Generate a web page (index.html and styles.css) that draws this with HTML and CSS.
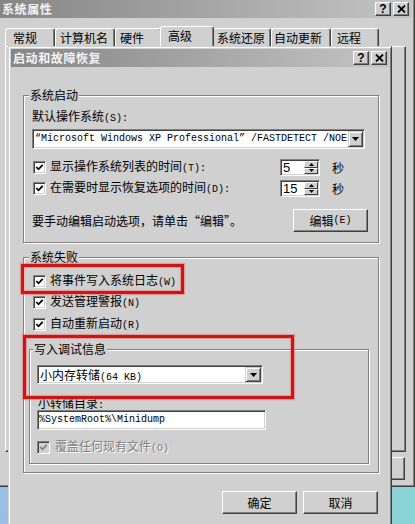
FILE: index.html
```html
<!DOCTYPE html>
<html lang="zh-CN">
<head>
<meta charset="utf-8">
<title>系统属性</title>
<link rel="stylesheet" href="styles.css">
</head>
<body>
<div class="screen">
  <div class="window outer">
    <div class="titlebar">
      <span class="title-text">系统属性</span>
      <div class="title-btns">
        <span class="cap-btn"><span class="q">?</span></span>
        <span class="cap-btn"><svg width="9" height="8" viewBox="0 0 9 8"><path d="M1 0.5 L8 7.5 M8 0.5 L1 7.5" stroke="#000" stroke-width="1.8" fill="none"/></svg></span>
      </div>
    </div>
    <div class="tabs">
      <div class="tab t1">常规</div>
      <div class="tab t2">计算机名</div>
      <div class="tab t3">硬件</div>
      <div class="tab t4 sel">高级</div>
      <div class="tab t5">系统还原</div>
      <div class="tab t6">自动更新</div>
      <div class="tab t7">远程</div>
    </div>
    <div class="tab-panel"></div>
    <div class="outer-actions">
      <div class="btn">确定</div>
      <div class="btn">取消</div>
      <div class="btn">应用<span class="en">(A)</span></div>
    </div>
  </div>

  <div class="window dialog">
    <div class="titlebar">
      <span class="title-text">启动和故障恢复</span>
      <div class="title-btns">
        <span class="cap-btn"><span class="q">?</span></span>
        <span class="cap-btn"><svg width="9" height="8" viewBox="0 0 9 8"><path d="M1 0.5 L8 7.5 M8 0.5 L1 7.5" stroke="#000" stroke-width="1.8" fill="none"/></svg></span>
      </div>
    </div>
    <div class="dlg-body">
      <div class="group g1">
        <span class="legend">系统启动</span>
        <div class="lbl lbl-os">默认操作系统<span class="en">(S):</span></div>
        <div class="combo combo-os">
          <div class="combo-text mono">“Microsoft Windows XP Professional” /FASTDETECT /NOE</div>
          <div class="drop"><svg width="7" height="4" viewBox="0 0 7 4"><path d="M0 0 H7 L3.5 4 Z" fill="#000"/></svg></div>
        </div>
        <div class="chk-row r1">
          <span class="chk"><svg width="9" height="9" viewBox="0 0 9 9"><path d="M1.3 4 L3.5 6.3 L7.7 1.8" stroke="#000" stroke-width="1.8" fill="none"/></svg></span>
          <span class="chk-label">显示操作系统列表的时间<span class="en">(T):</span></span>
          <div class="spin">
            <div class="spin-field">5</div>
            <div class="spin-btns">
              <span class="sb"><svg width="5" height="3" viewBox="0 0 5 3"><path d="M0 3 H5 L2.5 0 Z" fill="#000"/></svg></span>
              <span class="sb"><svg width="5" height="3" viewBox="0 0 5 3"><path d="M0 0 H5 L2.5 3 Z" fill="#000"/></svg></span>
            </div>
          </div>
          <span class="unit">秒</span>
        </div>
        <div class="chk-row r2">
          <span class="chk"><svg width="9" height="9" viewBox="0 0 9 9"><path d="M1.3 4 L3.5 6.3 L7.7 1.8" stroke="#000" stroke-width="1.8" fill="none"/></svg></span>
          <span class="chk-label">在需要时显示恢复选项的时间<span class="en">(D):</span></span>
          <div class="spin">
            <div class="spin-field">15</div>
            <div class="spin-btns">
              <span class="sb"><svg width="5" height="3" viewBox="0 0 5 3"><path d="M0 3 H5 L2.5 0 Z" fill="#000"/></svg></span>
              <span class="sb"><svg width="5" height="3" viewBox="0 0 5 3"><path d="M0 0 H5 L2.5 3 Z" fill="#000"/></svg></span>
            </div>
          </div>
          <span class="unit">秒</span>
        </div>
        <div class="edit-row">
          <span class="edit-hint">要手动编辑启动选项，请单击“编辑”。</span>
          <div class="btn">编辑<span class="en">(E)</span></div>
        </div>
      </div>

      <div class="group g2">
        <span class="legend">系统失败</span>
        <div class="chk-row c1">
          <span class="chk"><svg width="9" height="9" viewBox="0 0 9 9"><path d="M1.3 4 L3.5 6.3 L7.7 1.8" stroke="#000" stroke-width="1.8" fill="none"/></svg></span>
          <span class="chk-label">将事件写入系统日志<span class="en">(W)</span></span>
        </div>
        <div class="chk-row c2">
          <span class="chk"><svg width="9" height="9" viewBox="0 0 9 9"><path d="M1.3 4 L3.5 6.3 L7.7 1.8" stroke="#000" stroke-width="1.8" fill="none"/></svg></span>
          <span class="chk-label">发送管理警报<span class="en">(N)</span></span>
        </div>
        <div class="chk-row c3">
          <span class="chk"><svg width="9" height="9" viewBox="0 0 9 9"><path d="M1.3 4 L3.5 6.3 L7.7 1.8" stroke="#000" stroke-width="1.8" fill="none"/></svg></span>
          <span class="chk-label">自动重新启动<span class="en">(R)</span></span>
        </div>
        <div class="group inner-group">
          <span class="legend">写入调试信息</span>
          <div class="combo combo-dump">
            <div class="combo-text">小内存转储<span class="en">(64 KB)</span></div>
            <div class="drop"><svg width="7" height="4" viewBox="0 0 7 4"><path d="M0 0 H7 L3.5 4 Z" fill="#000"/></svg></div>
          </div>
          <div class="lbl lbl-dir">小转储目录<span class="en">:</span></div>
          <div class="field text-dir mono">%SystemRoot%\Minidump</div>
          <div class="chk-row c4 disabled">
            <span class="chk"><svg width="9" height="9" viewBox="0 0 9 9"><path d="M1.3 4 L3.5 6.3 L7.7 1.8" stroke="#808080" stroke-width="1.8" fill="none"/></svg></span>
            <span class="chk-label">覆盖任何现有文件<span class="en">(O)</span></span>
          </div>
        </div>
      </div>

      <div class="dlg-actions">
        <div class="btn">确定</div>
        <div class="btn">取消</div>
      </div>
    </div>
  </div>

  <div class="mark mark1"></div>
  <div class="mark mark2"></div>
</div>
</body>
</html>
```

FILE: styles.css
```css
* { box-sizing: border-box; }
html, body { margin: 0; padding: 0; }
body {
  font-family: "Noto Sans CJK SC", "Noto Sans", sans-serif;
  font-size: 12px;
  color: #000;
}
.screen {
  position: relative;
  width: 415px;
  height: 524px;
  overflow: hidden;
  background: linear-gradient(100deg, #8fb6e2 0%, #a9cdea 45%, #8ad3d6 100%);
}
.en, .mono {
  font-family: "Liberation Mono", "DejaVu Sans Mono", monospace;
  font-size: 10px;
}

/* window frame */
.window {
  position: absolute;
  background: #d0d0d0;
  border: 1px solid;
  border-color: #d0d0d0 #404040 #404040 #d0d0d0;
  box-shadow: inset 1px 1px 0 #fff, inset -1px -1px 0 #808080;
  padding: 2px;
  display: flex;
  flex-direction: column;
}
.outer { left: -3px; top: -3px; width: 418px; height: 490px; z-index: 0; }
.dialog { left: 8px; top: 46px; width: 384px; height: 490px; z-index: 1; }

.titlebar {
  flex: none;
  height: 18px;
  background: linear-gradient(90deg, #868686 0%, #a2a2a2 45%, #c4c4c4 100%);
  display: flex;
  align-items: center;
  justify-content: space-between;
  padding: 0 2px 0 2px;
}
.outer .titlebar { padding-right: 3px; }
.title-text {
  color: #f4f4f4;
  font-weight: bold;
  font-size: 12px;
  letter-spacing: 0.6px;
  line-height: 18px;
}
.title-btns { display: flex; gap: 2px; }
.cap-btn {
  width: 16px;
  height: 14px;
  background: #d0d0d0;
  border: 1px solid;
  border-color: #fff #404040 #404040 #fff;
  box-shadow: inset -1px -1px 0 #808080;
  display: flex;
  align-items: center;
  justify-content: center;
}
.q {
  font-family: "Liberation Sans", sans-serif;
  font-weight: bold;
  font-size: 12px;
  line-height: 12px;
}

/* tabs of the outer window */
.tabs {
  flex: none;
  height: 28px;
  display: flex;
  align-items: flex-end;
  padding-left: 5px;
}
.tab {
  height: 18px;
  background: #d0d0d0;
  border-top: 1px solid #fff;
  border-left: 1px solid #fff;
  border-right: 1px solid #404040;
  box-shadow: inset -1px 0 0 #808080;
  border-radius: 3px 3px 0 0;
  line-height: 17px;
  padding-left: 4px;
  white-space: nowrap;
}
.t1 { width: 50px; padding-left: 7px; }
.t2 { width: 60px; }
.t3 { width: 47px; }
.t4 { width: 50px; }
.t5 { width: 59px; }
.t6 { width: 60px; padding-left: 2px; }
.t7 { width: 48px; padding-left: 5px; }
.tab.sel {
  width: 54px;
  height: 21px;
  margin: 0 -2px -1px;
  padding-left: 7px;
  line-height: 18px;
  position: relative;
  z-index: 2;
}
.tab-panel {
  flex: none;
  height: 406px;
  margin: 0 6px 0 5px;
  border: 1px solid;
  border-color: #fff #404040 #404040 #fff;
  box-shadow: inset -1px -1px 0 #808080;
  position: relative;
  z-index: 1;
}
.outer-actions {
  flex: none;
  display: flex;
  justify-content: flex-end;
  gap: 6px;
  margin-top: 5px;
  padding-right: 7px;
}

/* buttons */
.btn {
  width: 75px;
  height: 23px;
  flex: none;
  background: #d0d0d0;
  border: 1px solid;
  border-color: #fff #404040 #404040 #fff;
  box-shadow: inset -1px -1px 0 #808080;
  display: flex;
  align-items: center;
  justify-content: center;
  line-height: 14px;
  white-space: nowrap;
}

/* dialog body */
.dlg-body {
  flex: none;
  display: flex;
  flex-direction: column;
  padding: 28px 10px 0 12px;
}
.group {
  position: relative;
  flex: none;
  border: 1px solid #808080;
  box-shadow: 1px 1px 0 #fff, inset 1px 1px 0 #fff;
  display: flex;
  flex-direction: column;
}
.legend {
  position: absolute;
  top: -8px;
  left: 5px;
  padding: 0 1px;
  line-height: 14px;
  background: #d0d0d0;
  white-space: nowrap;
}
.g1 { height: 148px; padding: 0 13px 0 8px; }
.g2 { height: 216px; margin-top: 14px; padding: 0 0 0 8px; }
.inner-group {
  width: 340px;
  height: 115px;
  margin: 17px 0 0 -3px;
  padding: 0 0 0 7px;
}
.inner-group .legend { left: 3px; }

.lbl { height: 14px; line-height: 14px; white-space: nowrap; }
.lbl-os { margin-top: 13px; }
.lbl-dir { margin-top: 12px; margin-left: 1px; }

/* sunken fields */
.combo, .field, .spin {
  background: #fff;
  border: 1px solid;
  border-color: #808080 #fff #fff #808080;
  box-shadow: inset 1px 1px 0 #404040, inset -1px -1px 0 #d0d0d0;
  padding: 1px;
  flex: none;
}
.combo { display: flex; }
.combo-os { margin-top: 6px; height: 20px; }
.combo-dump { margin-top: 15px; width: 226px; height: 19px; }
.combo-text {
  flex: 1;
  min-width: 0;
  overflow: hidden;
  white-space: nowrap;
  padding-left: 1px;
  line-height: 15px;
}
.combo-os .combo-text { line-height: 16px; }
.drop {
  flex: none;
  width: 16px;
  background: #d0d0d0;
  border: 1px solid;
  border-color: #d0d0d0 #404040 #404040 #d0d0d0;
  box-shadow: inset 1px 1px 0 #fff, inset -1px -1px 0 #808080;
  display: flex;
  align-items: center;
  justify-content: center;
}
.combo-os .drop { width: 15px; }
.text-dir {
  width: 229px;
  height: 20px;
  line-height: 16px;
  padding-left: 1px;
  white-space: nowrap;
  overflow: hidden;
}

/* checkbox rows */
.chk-row { display: flex; align-items: center; flex: none; }
.r1 { margin-top: 10px; height: 17px; }
.r2 { margin-top: 4px; height: 17px; }
.c1 { margin-top: 15px; height: 16px; }
.c2 { margin-top: 5px; height: 16px; }
.c3 { margin-top: 6px; height: 16px; }
.c4 { margin-top: 9px; height: 16px; }
.chk {
  flex: none;
  width: 13px;
  height: 13px;
  margin-left: 1px;
  background: #fff;
  border: 1px solid;
  border-color: #808080 #fff #fff #808080;
  box-shadow: inset 1px 1px 0 #404040, inset -1px -1px 0 #d0d0d0;
  display: flex;
  align-items: center;
  justify-content: center;
}
.chk-label { margin-left: 4px; line-height: 14px; white-space: nowrap; }
.g1 .chk-label { width: 230px; }
.c4 .chk { margin-left: 0; }
.c4 .chk-label { margin-left: 5px; }
.disabled .chk { background: #d0d0d0; }
.disabled .chk-label { color: #808080; text-shadow: 1px 1px 0 #fff; }

.spin { width: 40px; height: 17px; display: flex; }
.spin-field {
  flex: 1;
  font-family: "Liberation Sans", sans-serif;
  font-size: 13px;
  line-height: 13px;
  padding-left: 1px;
}
.spin-btns { width: 14px; display: flex; flex-direction: column; }
.sb {
  flex: 1;
  background: #d0d0d0;
  border: 1px solid;
  border-color: #fff #404040 #404040 #fff;
  display: flex;
  align-items: center;
  justify-content: center;
}
.unit { margin-left: 12px; line-height: 14px; }

.edit-row {
  display: flex;
  align-items: center;
  justify-content: space-between;
  margin: 12px -3px 0 0;
  height: 23px;
  flex: none;
}
.edit-hint { line-height: 14px; white-space: nowrap; }

.dlg-actions {
  display: flex;
  justify-content: flex-end;
  gap: 6px;
  margin: 18px 1px 0 0;
}

/* red annotation frames drawn over the screenshot */
.mark {
  position: absolute;
  z-index: 2;
  border: 3px solid #cc1515;
  box-shadow: 0 0 1px 1px rgba(235, 110, 110, 0.55), inset 0 0 1px 1px rgba(235, 110, 110, 0.55);
}
.mark1 { left: 21px; top: 264px; width: 163px; height: 30px; }
.mark2 { left: 23px; top: 335px; width: 271px; height: 64px; }
```
